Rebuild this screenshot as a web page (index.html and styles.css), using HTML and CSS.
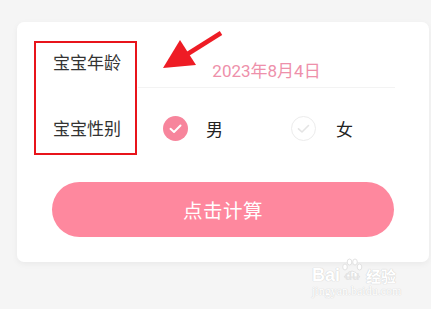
FILE: index.html
```html
<!DOCTYPE html>
<html lang="zh">
<head>
<meta charset="utf-8">
<link rel="stylesheet" href="styles.css">
</head>
<body>
<div class="page">
  <div class="card">
    <div class="row row-age">
      <div class="label label-age">宝宝年龄</div>
      <div class="value value-age"><span class="date">2023年8月4日</span></div>
    </div>
    <div class="row row-sex">
      <div class="label">宝宝性别</div>
      <div class="options">
        <div class="option">
          <span class="radio radio-on">
            <svg viewBox="0 0 25 25" width="25" height="25"><path d="M7.5 12.8 L11 16 L17.5 9.5" fill="none" stroke="#fff" stroke-width="2" stroke-linecap="round" stroke-linejoin="round"/></svg>
          </span>
          <span class="opt-text">男</span>
        </div>
        <div class="option">
          <span class="radio radio-off">
            <svg viewBox="0 0 25 25" width="25" height="25"><path d="M7.5 12.8 L11 16 L17.5 9.5" fill="none" stroke="#e4e4e4" stroke-width="1.6" stroke-linecap="round" stroke-linejoin="round"/></svg>
          </span>
          <span class="opt-text opt-text-2">女</span>
        </div>
      </div>
    </div>
    <div class="btn">点击计算</div>
  </div>
</div>
<div class="annot-box"></div>
<svg class="annot-arrow" width="80" height="50" viewBox="150 25 80 50">
  <line x1="221" y1="33" x2="186" y2="55" stroke="#ee1c25" stroke-width="4.5" stroke-linecap="butt"/>
  <polygon points="163,68 180,40 196,65" fill="#ee1c25"/>
</svg>
<div class="watermark">
  <div class="wm-top"><span class="wm-bai">Bai</span><span class="wm-paw"><svg width="22" height="22" viewBox="0 0 22 22"><ellipse cx="4" cy="9" rx="2.3" ry="3" fill="#fff" stroke="#e2e2e2"/><ellipse cx="8.5" cy="4" rx="2.3" ry="3" fill="#fff" stroke="#e2e2e2"/><ellipse cx="14" cy="4" rx="2.3" ry="3" fill="#fff" stroke="#e2e2e2"/><ellipse cx="18.5" cy="9" rx="2.3" ry="3" fill="#fff" stroke="#e2e2e2"/><path d="M3 19 Q11 7 19 19 Z" fill="#fff" stroke="#e2e2e2"/></svg><span class="wm-du">du</span></span><span class="wm-jy">经验</span></div>
  <div class="wm-url">jingyan.baidu.com</div>
</div>
</body>
</html>
```
FILE: styles.css
```css
html, body {
  margin: 0;
  padding: 0;
}
body {
  background: #f5f5f5;
  width: 431px;
  height: 309px;
  overflow: hidden;
  position: relative;
  font-family: "Noto Sans CJK SC", "Noto Sans", sans-serif;
}
.page {
  padding: 22px 2px 0 17px;
}
.card {
  background: #fff;
  border-radius: 7px;
  box-shadow: 0 2px 6px rgba(0,0,0,0.05);
  height: 240px;
  box-sizing: border-box;
  padding-bottom: 24px;
}
.row {
  display: flex;
}
.label {
  width: 85px;
  padding-left: 36px;
  font-size: 17px;
  line-height: 22px;
  color: #333;
  flex-shrink: 0;
}
.label-age {
  padding-top: 29px;
}
.row-age {
  height: 66px;
}
.value-age {
  flex: 1;
  margin-right: 34px;
  border-bottom: 1px solid #f3f3f3;
  text-align: center;
  padding-top: 36px;
  box-sizing: border-box;
}
.date {
  font-family: Roboto, "Noto Sans CJK SC", sans-serif;
  font-size: 17px;
  line-height: 22px;
  color: #ee90aa;
}
.row-sex {
  height: 80px;
  align-items: center;
}
.options {
  display: flex;
  padding-left: 25px;
}
.option {
  display: flex;
  align-items: center;
  width: 128px;
}
.radio {
  width: 25px;
  height: 25px;
  border-radius: 50%;
  display: block;
  box-sizing: border-box;
}
.radio svg {
  display: block;
}
.radio-on {
  background: #f7859c;
}
.radio-off {
  border: 1px solid #ececec;
}
.radio-off svg {
  margin: -1px;
}
.opt-text {
  margin-left: 18px;
  font-size: 17px;
  color: #222;
}
.opt-text-2 {
  margin-left: 20px;
}
.btn {
  margin: 14px 35px 0 35px;
  height: 55px;
  border-radius: 28px;
  background: #fe889e;
  color: #fff;
  font-size: 19.5px;
  line-height: 55px;
  text-align: center;
  letter-spacing: 0.5px;
}
.annot-box {
  position: absolute;
  left: 34px;
  top: 41px;
  width: 99px;
  height: 110px;
  border: 2px solid #e8141b;
}
.annot-arrow {
  position: absolute;
  left: 150px;
  top: 25px;
}
.watermark {
  position: absolute;
  left: 312px;
  top: 256px;
  width: 92px;
}
.wm-top {
  display: flex;
  align-items: flex-end;
  height: 28px;
}
.wm-bai, .wm-du, .wm-jy {
  font-family: "Liberation Sans", sans-serif;
  font-weight: bold;
  color: #fff;
  font-size: 18px;
  line-height: 17px;
  text-shadow: 0 0 1px #cfcfcf, 0 0 1px #cfcfcf;
}
.wm-jy {
  font-family: "Noto Sans CJK SC", sans-serif;
  font-size: 15px;
  margin-left: 2px;
}
.wm-paw {
  position: relative;
  display: flex;
  align-items: flex-end;
  width: 24px;
  height: 28px;
  justify-content: center;
}
.wm-paw svg {
  position: absolute;
  top: 2px;
  left: 1px;
}
.wm-du {
  position: relative;
  font-size: 12px;
  line-height: 12px;
  color: #e4e4e4;
  text-shadow: none;
  margin-bottom: 2px;
}
.wm-url {
  font-family: "Liberation Serif", serif;
  font-size: 12px;
  line-height: 14px;
  color: #fff;
  text-shadow: 0 0 1px #d4d4d4, 0 0 1px #d4d4d4;
}
```
